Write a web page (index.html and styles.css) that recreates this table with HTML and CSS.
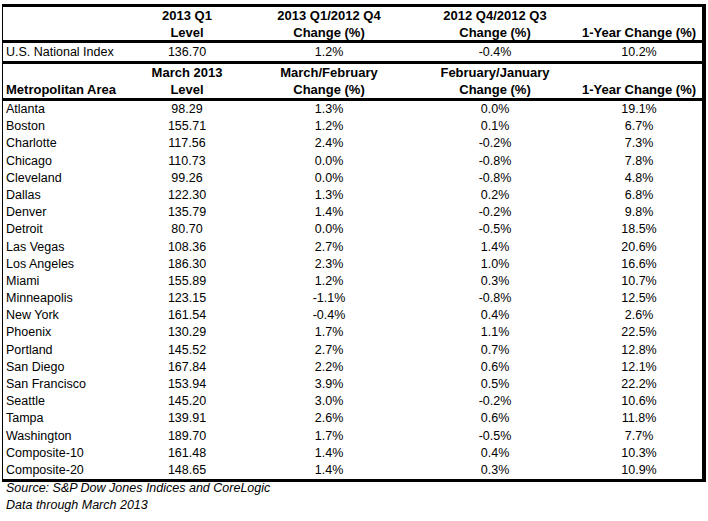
FILE: index.html
```html
<!DOCTYPE html>
<html>
<head>
<meta charset="utf-8">
<link rel="stylesheet" href="styles.css">
</head>
<body>
<div class="page">
  <div class="sheet">
    <div class="grid head">
      <div class="c1"></div>
      <div class="c"><div>2013 Q1</div><div>Level</div></div>
      <div class="c"><div>2013 Q1/2012 Q4</div><div>Change (%)</div></div>
      <div class="c"><div>2012 Q4/2012 Q3</div><div>Change (%)</div></div>
      <div class="c"><div>&nbsp;</div><div>1-Year Change (%)</div></div>
    </div>
    <div class="grid national">
      <div class="c1">U.S. National Index</div>
      <div class="c">136.70</div>
      <div class="c">1.2%</div>
      <div class="c">-0.4%</div>
      <div class="c">10.2%</div>
    </div>
    <div class="grid head metro">
      <div class="c1"><div>&nbsp;</div><div>Metropolitan Area</div></div>
      <div class="c"><div>March 2013</div><div>Level</div></div>
      <div class="c"><div>March/February</div><div>Change (%)</div></div>
      <div class="c"><div>February/January</div><div>Change (%)</div></div>
      <div class="c"><div>&nbsp;</div><div>1-Year Change (%)</div></div>
    </div>
    <div class="rows" id="rows"></div>
  </div>
  <div class="foot">
    <div>Source: S&amp;P Dow Jones Indices and CoreLogic</div>
    <div>Data through March 2013</div>
  </div>
</div>
<script src="app.js"></script>
</body>
</html>
```
FILE: app.js
```js
const data = [
["Atlanta","98.29","1.3%","0.0%","19.1%"],
["Boston","155.71","1.2%","0.1%","6.7%"],
["Charlotte","117.56","2.4%","-0.2%","7.3%"],
["Chicago","110.73","0.0%","-0.8%","7.8%"],
["Cleveland","99.26","0.0%","-0.8%","4.8%"],
["Dallas","122.30","1.3%","0.2%","6.8%"],
["Denver","135.79","1.4%","-0.2%","9.8%"],
["Detroit","80.70","0.0%","-0.5%","18.5%"],
["Las Vegas","108.36","2.7%","1.4%","20.6%"],
["Los Angeles","186.30","2.3%","1.0%","16.6%"],
["Miami","155.89","1.2%","0.3%","10.7%"],
["Minneapolis","123.15","-1.1%","-0.8%","12.5%"],
["New York","161.54","-0.4%","0.4%","2.6%"],
["Phoenix","130.29","1.7%","1.1%","22.5%"],
["Portland","145.52","2.7%","0.7%","12.8%"],
["San Diego","167.84","2.2%","0.6%","12.1%"],
["San Francisco","153.94","3.9%","0.5%","22.2%"],
["Seattle","145.20","3.0%","-0.2%","10.6%"],
["Tampa","139.91","2.6%","0.6%","11.8%"],
["Washington","189.70","1.7%","-0.5%","7.7%"],
["Composite-10","161.48","1.4%","0.4%","10.3%"],
["Composite-20","148.65","1.4%","0.3%","10.9%"]
];
const rows = document.getElementById("rows");
for (const r of data) {
  const row = document.createElement("div");
  row.className = "grid row";
  r.forEach((v, i) => {
    const d = document.createElement("div");
    d.className = i === 0 ? "c1" : "c";
    d.textContent = v;
    row.appendChild(d);
  });
  rows.appendChild(row);
}
```
FILE: styles.css
```css
html, body {
  margin: 0;
  padding: 0;
  background: #fff;
}
body {
  font-family: "Liberation Sans", Arial, sans-serif;
  font-size: 12.5px;
  color: #000;
}
.page {
  padding: 4px 0 0 2px;
}
.sheet {
  width: 699px;
  border-top: 3px solid #000;
  border-right: 4px solid #000;
  border-bottom: 3px solid #000;
  border-left: 1px solid #000;
}
.grid {
  display: grid;
  grid-template-columns: 127px 114px 170px 162px 126px;
}
.c1 {
  padding-left: 3px;
  white-space: nowrap;
}
.c {
  text-align: center;
  white-space: nowrap;
}
.head {
  font-weight: bold;
  font-size: 13px;
  line-height: 17px;
  height: 33px;
  border-bottom: 3px solid #000;
  align-items: end;
}
.national {
  height: 18px;
  line-height: 18px;
  border-bottom: 3px solid #000;
}
.metro {
  height: 34px;
}
.row {
  height: 17.2px;
  line-height: 17px;
}
.foot {
  font-style: italic;
  line-height: 17px;
  padding-left: 4px;
  margin-top: -2px;
}
```
